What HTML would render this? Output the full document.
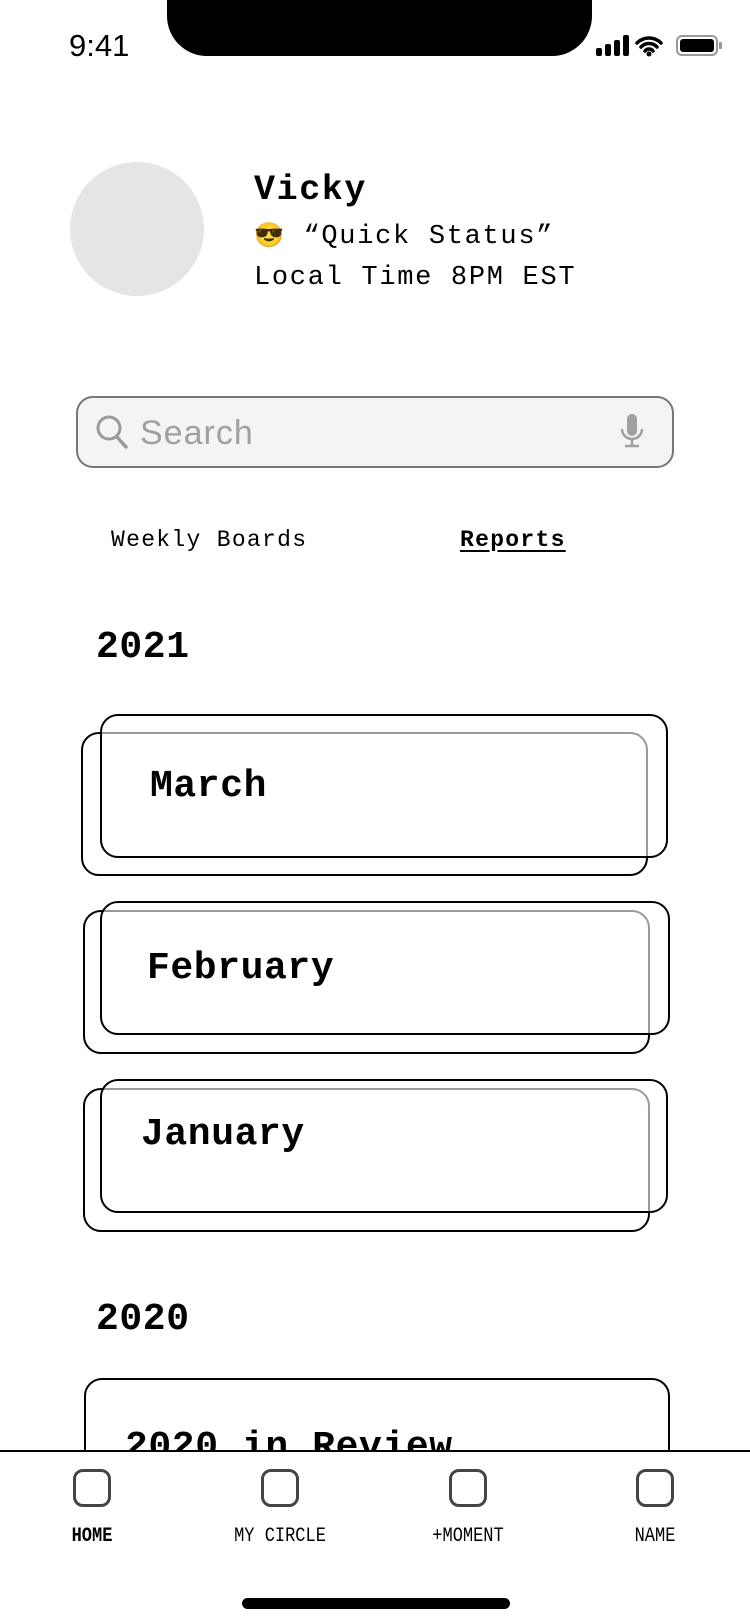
<!DOCTYPE html>
<html><head><meta charset="utf-8"><style>
*{margin:0;padding:0;box-sizing:border-box}
body{width:750px;height:1624px;background:#fff;position:relative;overflow:hidden;font-family:"Liberation Mono","DejaVu Sans Mono",monospace;color:#000}
.a{position:absolute}
.card{position:absolute;border:2px solid #000;border-radius:18px}
.front{background:rgba(255,255,255,0.6)}
.t{position:absolute;font-weight:bold;font-size:38px;white-space:nowrap;letter-spacing:0.6px}
.ic{position:absolute;width:38px;height:38px;border:3.5px solid #444;border-radius:10px;top:1469px}
.lb{position:absolute;top:1525px;font-size:20px;width:200px;text-align:center;transform:scaleX(.85)}
</style></head><body>
<div class="a" style="left:69px;top:28px;font-family:'Liberation Sans',sans-serif;font-size:31px;font-weight:500">9:41</div>
<div class="a" style="left:167px;top:-30px;width:425px;height:86px;background:#000;border-radius:0 0 40px 40px"></div>
<svg class="a" style="left:595px;top:34px" width="130" height="24" viewBox="0 0 130 24">
<rect x="1" y="14" width="6" height="8" rx="2"/><rect x="10" y="10" width="6" height="12" rx="2"/><rect x="19" y="6" width="6" height="16" rx="2"/><rect x="28" y="1" width="6" height="21" rx="2"/>
<path d="M42 9a17 17 0 0 1 24 0M46 13a11 11 0 0 1 16 0M50 17a5 5 0 0 1 8 0" stroke="#000" stroke-width="3.5" fill="none" stroke-linecap="round"/><circle cx="54" cy="20" r="2.5"/>
<rect x="82" y="2" width="40" height="19" rx="5" fill="none" stroke="#999" stroke-width="2"/><rect x="85" y="5" width="34" height="13" rx="3"/><rect x="124" y="8" width="3" height="7" rx="1" fill="#999"/>
</svg>
<div class="a" style="left:70px;top:162px;width:134px;height:134px;border-radius:50%;background:#e5e5e5"></div>
<div class="a" style="left:254px;top:170px;font-size:35px;font-weight:bold;letter-spacing:1.6px">Vicky</div>
<div class="a" style="left:254px;top:221px;font-size:27px;white-space:nowrap;letter-spacing:1.7px"><span style="font-family:'Noto Color Emoji','DejaVu Sans',sans-serif;font-size:24px">😎</span> “Quick Status”</div>
<div class="a" style="left:254px;top:263px;font-size:27px;white-space:nowrap;letter-spacing:1.7px">Local Time 8PM EST</div>
<div class="a" style="left:76px;top:396px;width:598px;height:72px;background:#f4f4f4;border:2px solid #777;border-radius:17px"></div>
<svg class="a" style="left:95px;top:414px" width="34" height="36" viewBox="0 0 34 36"><circle cx="14" cy="14" r="11" fill="none" stroke="#9a9a9a" stroke-width="3"/><path d="M22 23l9 10" stroke="#9a9a9a" stroke-width="3.5" stroke-linecap="round"/></svg>
<div class="a" style="left:140px;top:414px;font-size:34px;color:#a0a0a0;font-family:'Liberation Sans',sans-serif;letter-spacing:1px">Search</div>
<svg class="a" style="left:619px;top:413px" width="26" height="36" viewBox="0 0 26 36"><rect x="8" y="1" width="10" height="22" rx="5" fill="#a0a0a0"/><path d="M3 16a10 10 0 0 0 20 0M13 26v6M6 33h14" stroke="#a0a0a0" stroke-width="2.5" fill="none"/></svg>
<div class="a" style="left:111px;top:527px;font-size:23px;letter-spacing:1.3px">Weekly Boards</div>
<div class="a" style="left:460px;top:527px;font-size:23px;font-weight:bold;letter-spacing:1.3px;text-decoration:underline;text-underline-offset:4px">Reports</div>
<div class="t" style="left:96px;top:626px">2021</div>
<div class="card" style="left:81px;top:732px;width:567px;height:144px"></div>
<div class="card front" style="left:100px;top:714px;width:568px;height:144px"></div>
<div class="t" style="left:150px;top:765px">March</div>
<div class="card" style="left:83px;top:910px;width:567px;height:144px"></div>
<div class="card front" style="left:100px;top:901px;width:570px;height:134px"></div>
<div class="t" style="left:147px;top:947px">February</div>
<div class="card" style="left:83px;top:1088px;width:567px;height:144px"></div>
<div class="card front" style="left:100px;top:1079px;width:568px;height:134px"></div>
<div class="t" style="left:141px;top:1113px">January</div>
<div class="t" style="left:96px;top:1298px">2020</div>
<div class="card" style="left:84px;top:1378px;width:586px;height:120px"></div>
<div class="t" style="left:125px;top:1426px">2020 in Review</div>
<div class="a" style="left:0;top:1450px;width:750px;height:174px;background:#fff;border-top:2px solid #000"></div>
<div class="ic" style="left:73px"></div>
<div class="ic" style="left:261px"></div>
<div class="ic" style="left:449px"></div>
<div class="ic" style="left:636px"></div>
<div class="lb" style="left:-8px;font-weight:bold">HOME</div>
<div class="lb" style="left:180px">MY CIRCLE</div>
<div class="lb" style="left:368px">+MOMENT</div>
<div class="lb" style="left:555px">NAME</div>
<div class="a" style="left:242px;top:1598px;width:268px;height:11px;background:#000;border-radius:6px"></div>
</body></html>
